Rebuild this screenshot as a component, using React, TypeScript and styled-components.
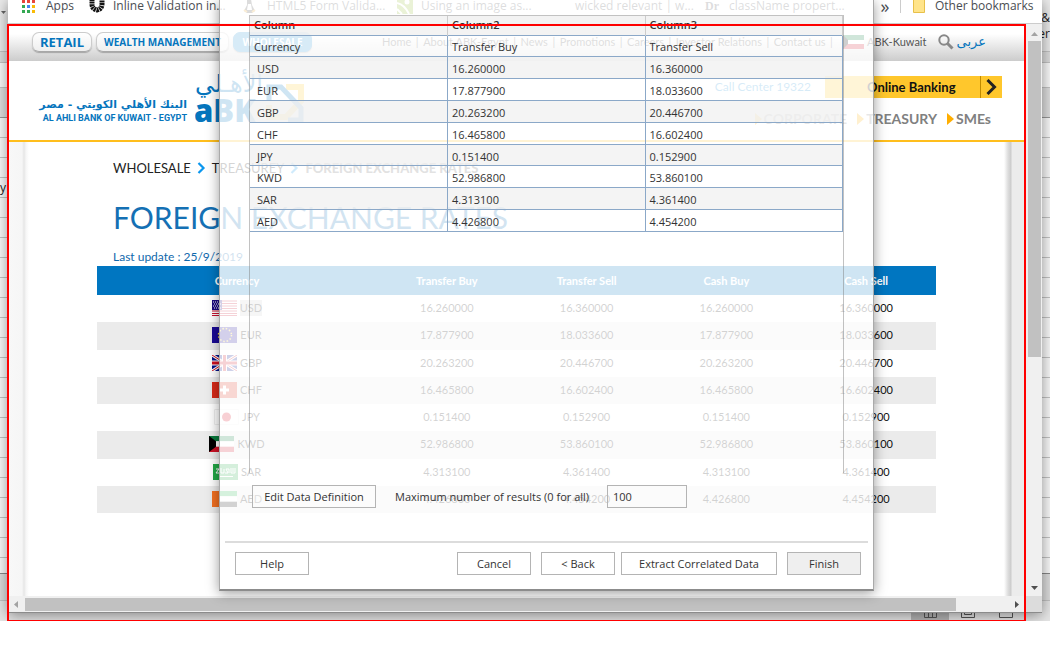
import React from 'react';
import styled, { createGlobalStyle } from 'styled-components';

const site = "Lato, 'Open Sans', sans-serif";
const system = "'Open Sans', 'Noto Sans', sans-serif";
const arabic = "'DejaVu Sans', sans-serif";

const Global = createGlobalStyle`
  * { box-sizing: border-box; }
  body { margin: 0; background: #fff; font-family: ${site}; }
  a { text-decoration: none; color: inherit; white-space: nowrap; }
  button, input { font: inherit; color: inherit; margin: 0; }
  h1 { margin: 0; font-weight: 400; }
  svg { display: block; flex: none; }
`;

const Desktop = styled.main`
  position: relative;
  overflow: hidden;
`;

const Sheet = styled.div`
  display: flex;
  flex-direction: column;
`;

const SheetRow = styled.div<{ $h: number; $bg?: string; $line?: string }>`
  height: ${p => p.$h}px;
  background: ${p => p.$bg || '#fbfbfb'};
  border-bottom: 1px solid ${p => p.$line || '#c4c4c4'};
  display: flex;
  justify-content: space-between;
  align-items: center;
  overflow: hidden;
  font: 12px/16px ${system};
  color: #222;
`;

const RibbonCaret = styled.div`
  padding: 0 0 26px 1px;
`;

const RibbonText = styled.div`
  margin-left: auto;
  width: 8px;
  display: flex;
  flex-direction: column;
  align-items: flex-end;
`;

const StatusBar = styled.div`
  height: 20px;
  background: #e6e6e6;
  display: flex;
  justify-content: flex-end;
  align-items: center;
  padding-right: 25px;
`;

const ViewIcon = styled.div<{ $on?: boolean }>`
  width: 38px;
  height: 20px;
  display: flex;
  align-items: center;
  justify-content: center;
  padding-top: 2px;
  background: ${p => (p.$on ? '#b4b4b4' : 'transparent')};
`;

const BrowserWindow = styled.section`
  position: absolute;
  top: 0;
  left: 8px;
  right: 8px;
  height: 613px;
  background: #fff;
  display: flex;
  flex-direction: column;
  border-bottom: 1px solid #8b8b8b;
  box-shadow: 0 2px 14px rgba(0, 0, 0, 0.45);
`;

const Bookmarks = styled.nav`
  height: 24px;
  padding: 0 11px 11px 14px;
  display: flex;
  align-items: center;
  font: 12px/12px ${system};
  color: #4a4d52;
  border-bottom: 1px solid #ccc;
`;

const Bookmark = styled.a<{ $w: number; $gap?: number }>`
  width: ${p => p.$w}px;
  display: flex;
  align-items: center;
  gap: ${p => p.$gap || 8}px;
  flex: none;
`;

const SerifMark = styled.strong`
  font: 700 12px/12px 'Liberation Serif', serif;
`;

const More = styled.button`
  border: 0;
  border-right: 1px solid #ccc;
  background: none;
  padding: 0 10px 0 0;
  width: 21px;
  height: 14px;
  line-height: 12px;
  margin-left: auto;
  margin-right: 12px;
  font-size: 18px;
`;

const Viewport = styled.div`
  flex: 1;
  display: grid;
  grid-template-columns: 1fr 17px;
  grid-template-rows: 1fr 16px;
  min-height: 0;
`;

const Site = styled.div`
  min-width: 0;
  display: flex;
  flex-direction: column;
  padding: 1px 1px 0 1px;
`;

const VScroll = styled.div`
  background: #f0f0f0;
  display: flex;
  flex-direction: column;
  align-items: center;
  justify-content: space-between;
  padding: 8px 1px 6px 2px;
`;

const VThumb = styled.div`
  width: 13px;
  height: 316px;
  margin: 5px 0 auto;
  background: #c1c1c1;
`;

const HScroll = styled.div`
  background: #f0f0f0;
  display: flex;
  align-items: center;
  padding: 0 6px;
`;

const HThumb = styled.div`
  width: 931px;
  height: 13px;
  margin: 0 auto 0 7px;
  background: #c1c1c1;
`;

const Corner = styled.div`
  background: #dcdcdc;
`;

const TopBar = styled.div`
  height: 36px;
  padding: 0 38px 2px 23px;
  display: flex;
  align-items: center;
  background: linear-gradient(#fff 25%, #cccccc);
  font-size: 11px;
  line-height: 16px;
  color: #555;
`;

const Pill = styled.button<{ $size: number; $w: number; $active?: boolean }>`
  width: ${p => p.$w}px;
  height: 20px;
  padding: 0;
  margin-right: 4px;
  border: 1px solid ${p => (p.$active ? '#2a94d6' : '#ccc')};
  border-bottom-color: ${p => (p.$active ? '#2a94d6' : '#a8a8a8')};
  border-radius: 7px;
  background: ${p => (p.$active ? '#2a94d6' : 'linear-gradient(#fff, #efefef)')};
  color: ${p => (p.$active ? '#fff' : '#0575bd')};
  font: 700 ${p => p.$size}px/16px 'Open Sans', sans-serif;
  white-space: nowrap;
  box-shadow: 0 1px 1px rgba(0, 0, 0, 0.25);
`;

const TopLinks = styled.div`
  width: 451px;
  margin-left: 66px;
  display: flex;
  justify-content: space-between;
`;

const TopRight = styled.div`
  flex: 1;
  display: flex;
  align-items: center;
  justify-content: space-between;
  margin-left: 10px;
`;

const KuwaitLink = styled.a`
  padding-right: 8px;
`;

const ArabicLink = styled.a`
  font: 13px/16px ${arabic};
  color: #0575bd;
`;

const Header = styled.header`
  height: 81px;
  border-bottom: 2px solid #ffbe1d;
  padding: 0 22px 0 31px;
  display: flex;
  justify-content: space-between;
`;

const Brand = styled.div`
  display: flex;
  align-items: flex-start;
  gap: 8px;
  padding-top: 8px;
`;

const BankName = styled.div`
  width: 147px;
  padding-top: 28px;
  color: #0575bd;
  text-align: right;
  white-space: nowrap;
`;

const BankArabic = styled.div`
  font: 700 11px/15px ${arabic};
`;

const BankEnglish = styled.div`
  font: 700 9px/12px Roboto, sans-serif;
`;

const HeaderRight = styled.div`
  display: flex;
  flex-direction: column;
  align-items: flex-end;
  gap: 13px;
  padding-top: 15px;
`;

const CallRow = styled.div`
  display: flex;
  align-items: center;
  gap: 14px;
  font-size: 12px;
  line-height: 16px;
  color: #2a94d6;
`;

const Banking = styled.a`
  width: 177px;
  height: 22px;
  display: flex;
  background: #ffc72c;
  color: #111;
  font-weight: 700;
  font-size: 13px;
  line-height: 22px;
`;

const BankingText = styled.span`
  flex: 1;
  padding-left: 42px;
  border-right: 1px solid #c08a00;
`;

const BankingArrow = styled.span`
  width: 21px;
  display: flex;
  align-items: center;
  justify-content: center;
`;

const Sections = styled.div`
  display: flex;
  gap: 10px;
  padding-right: 11px;
  font-size: 14px;
  line-height: 16px;
  font-weight: 700;
  color: #808080;
`;

const Section = styled.a`
  display: flex;
  align-items: center;
  gap: 2px;
`;

const Body = styled.div`
  flex: 1;
  display: grid;
  grid-template-columns: 20px 1fr 20px;
`;

const Shade = styled.div<{ $right?: boolean }>`
  background: ${p =>
    p.$right
      ? 'linear-gradient(90deg, #fff, #ddd 4px, #ccc 7px, #ececec 8px, #ececec)'
      : 'linear-gradient(90deg, #f8f8f8, #f6f6f6 13px, #e6e6e6 15px, #f6f6f6 17px, #fff)'};
`;

const Content = styled.div`
  padding: 0 68px;
`;

const Crumbs = styled.div`
  display: flex;
  align-items: center;
  gap: 6px;
  padding: 16px 0 0 16px;
  font-size: 13px;
  line-height: 20px;
  color: #222;
`;

const Here = styled.strong`
  font-weight: 900;
  color: #666;
  white-space: nowrap;
`;

const Title = styled.h1`
  padding: 19px 0 0 16px;
  font-size: 30px;
  line-height: 40px;
  color: #1470b4;
  white-space: nowrap;
`;

const Updated = styled.div`
  padding: 12px 0 0 16px;
  font-size: 12px;
  line-height: 16px;
  color: #0f68ac;
`;

const Rates = styled.table`
  width: 100%;
  height: 247px;
  table-layout: fixed;
  border-collapse: collapse;
  margin-top: 1px;
  font-size: 11px;
  line-height: 16px;
  text-align: center;
  color: #111;

  th { height: 29px; padding: 0; background: #0076c1; color: #fff; font-weight: 700; }
  th:first-child { width: 280px; }
  td { padding: 0 0 1px; }
  tbody tr:nth-child(even) { background: #ebebeb; }
`;

const Code = styled.span<{ $hi?: boolean }>`
  background: ${p => (p.$hi ? '#d0d0d0' : 'transparent')};
`;

const FlagCell = styled.div`
  display: flex;
  justify-content: center;
  align-items: center;
  gap: 3px;
`;

const Dialog = styled.section`
  position: absolute;
  top: 0;
  left: 219px;
  width: 655px;
  height: 591px;
  padding: 15px 5px 0;
  display: flex;
  flex-direction: column;
  background: rgba(255, 255, 255, 0.81);
  border: 1px solid #aaa;
  border-top: 0;
  border-bottom: 2px solid #8c8c8c;
  box-shadow: 0 2px 12px rgba(0, 0, 0, 0.4);
  font: 11px/16px ${system};
  color: #333;
`;

const GridBox = styled.div`
  height: 458px;
  margin: 0 24px;
  border: 1px solid rgba(120, 120, 120, 0.45);
  border-bottom: 0;
`;

const Grid = styled.table`
  width: 100%;
  height: 216px;
  table-layout: fixed;
  border-collapse: collapse;

  th { height: 19px; padding: 0 4px; text-align: left; font-weight: 600; background: rgba(240, 240, 240, 0.8); border-right: 1px solid #ccc; }
  td { padding: 3px 4px 0; border: 1px solid #8ba8c8; }
  td:first-child { border-left: 0; }
  tr + tr td:first-child { padding-left: 7px; }
  tbody tr:nth-child(even) { background: rgba(240, 240, 240, 0.7); }
`;

const Options = styled.div`
  display: flex;
  align-items: center;
  padding: 12px 0 0 27px;
`;

const Btn = styled.button<{ $w: number; $shade?: boolean }>`
  width: ${p => p.$w}px;
  height: 23px;
  padding: 0;
  border: 1px solid #b4b4b4;
  background: ${p => (p.$shade ? '#efefef' : 'rgba(255, 255, 255, 0.3)')};
  white-space: nowrap;
`;

const MaxLabel = styled.label`
  width: 212px;
  margin-left: 19px;
  white-space: nowrap;
`;

const MaxInput = styled.input`
  width: 80px;
  height: 23px;
  padding: 0 5px;
  border: 1px solid #b4b4b4;
  background: transparent;
`;

const Footer = styled.footer`
  display: flex;
  gap: 6px;
  margin-top: 33px;
  padding: 9px 7px 0 10px;
  border-top: 2px solid #dcdcdc;
`;

const ButtonPair = styled.div`
  display: flex;
  gap: 10px;
`;

const Spacer = styled.div`
  flex: 1;
`;

const RedFrame = styled.div`
  position: absolute;
  top: 24px;
  left: 7px;
  right: 24px;
  bottom: 0;
  border: 2px solid #f00;
  border-bottom-width: 1px;
  pointer-events: none;
`;

const rates = [
  ['USD', '16.260000', '16.360000'],
  ['EUR', '17.877900', '18.033600'],
  ['GBP', '20.263200', '20.446700'],
  ['CHF', '16.465800', '16.602400'],
  ['JPY', '0.151400', '0.152900'],
  ['KWD', '52.986800', '53.860100'],
  ['SAR', '4.313100', '4.361400'],
  ['AED', '4.426800', '4.454200'],
];

function Flag({ code }: { code: string }) {
  const art: Record<string, React.ReactNode> = {
    USD: (
      <>
        <path d="M0 0h25v16H0z" fill="#fff" />
        <path d="M0 1h25M0 3.500h25M0 6h25M0 8.500h25M0 11h25M0 13.500h25M0 15.500h25" stroke="#c8102e" />
        <path d="M0 0h10v10H0z" fill="#1a0a80" />
        <path d="M1 2h8M2 4h8M1 6h8M2 8h8" stroke="#fff" strokeDasharray="1 1" />
      </>
    ),
    EUR: (
      <>
        <path d="M0 0h25v16H0z" fill="#1a0a96" />
        <circle cx="13" cy="8" r="6.500" fill="none" stroke="#fd3" strokeWidth="1.500" strokeDasharray="1.500 1.900" />
      </>
    ),
    GBP: (
      <>
        <path d="M0 0h25v16H0z" fill="#00108a" />
        <path d="M0 0l25 16M25 0L0 16" stroke="#fff" strokeWidth="3" />
        <path d="M0 0l25 16M25 0L0 16" stroke="#d01020" />
        <path d="M12.500 0v16M0 8h25" stroke="#fff" strokeWidth="5" />
        <path d="M12.500 0v16M0 8h25" stroke="#d01020" strokeWidth="3" />
      </>
    ),
    CHF: (
      <>
        <path d="M0 0h25v16H0z" fill="#d82a18" />
        <path d="M12.500 3.500v9M8 8h9" stroke="#fff" strokeWidth="3" />
      </>
    ),
    JPY: (
      <>
        <path d="M.5.5h24v15H.5z" fill="#fff" stroke="#eee" />
        <circle cx="12.500" cy="8" r="4.500" fill="#d80a1e" />
      </>
    ),
    KWD: (
      <>
        <path d="M0 0h25v5.300H0z" fill="#087a3c" />
        <path d="M0 5.300h25v5.400H0z" fill="#fff" />
        <path d="M0 10.700h25V16H0z" fill="#ce1126" />
        <path d="M0 0l7 5.300v5.400L0 16z" fill="#000" />
      </>
    ),
    SAR: (
      <>
        <path d="M0 0h25v16H0z" fill="#22a846" />
        <path d="M3 5h3L3 9h4M8 4v5h3V5M12 9h3l-2-4h3v4M18 4v5h4V4M20 4v4" fill="none" stroke="#fff" />
        <path d="M6 12.500h14" stroke="#fff" />
      </>
    ),
    AED: (
      <>
        <path d="M0 0h25v5.300H0z" fill="#22b24c" />
        <path d="M0 5.300h25v5.400H0z" fill="#fff" />
        <path d="M0 10.700h25V16H0z" fill="#111" />
        <path d="M0 0h7v16H0z" fill="#f37021" />
      </>
    ),
  };
  return (
    <svg width="25" height="16" viewBox="0 0 25 16">
      {art[code]}
    </svg>
  );
}

const Chevron = () => (
  <svg width="9" height="14" viewBox="0 0 9 14">
    <path d="M1.500 2l5 5-5 5" fill="none" stroke="#0a96ee" strokeWidth="2.200" />
  </svg>
);

const Triangle = () => (
  <svg width="7" height="12" viewBox="0 0 7 12">
    <path d="M0 0l7 6-7 6z" fill="#ffae00" />
  </svg>
);

function Logo() {
  return (
    <svg width="112" height="58" viewBox="0 0 112 58">
      <text x="0" y="23" fontFamily="DejaVu Sans" fontSize="24" fill="#0575bd">الأهـلي</text>
      <text x="-1" y="53" fontFamily="Open Sans" fontWeight="800" fontSize="31" fill="#0575bd">aBK</text>
      <path d="M91 18h15v14L91 48H74V36" fill="none" stroke="#ffc72c" strokeWidth="6" />
      <path d="M74 32V18h12l20 21v12H93" fill="none" stroke="#0575bd" strokeWidth="5" />
    </svg>
  );
}

const gridRows = [['Currency', 'Transfer Buy', 'Transfer Sell'], ...rates];
const topLinks = ['Home', 'About ABK-Egypt', 'News', 'Promotions', 'Careers', 'Investor Relations', 'Contact us'];

export default function App() {
  return (
    <>
      <Global />
      <Desktop>
        <Sheet>
          <SheetRow $h={52} $bg="#ececec">
            <RibbonCaret>
              <svg width="5" height="3" viewBox="0 0 5 3"><path d="M0 0h5L2.500 3z" fill="#666" /></svg>
            </RibbonCaret>
            <RibbonText><span>&amp;</span><span>er</span></RibbonText>
          </SheetRow>
          <SheetRow $h={11} $bg="#dedede" />
          <SheetRow $h={25} />
          <SheetRow $h={30} $bg="#e0e0e0" $line="#999" />
          <SheetRow $h={20} />
          <SheetRow $h={20} />
          <SheetRow $h={20} />
          <SheetRow $h={20}>y</SheetRow>
          {Array.from({ length: 18 }, (_, i) => <SheetRow key={i} $h={20} />)}
          <SheetRow $h={16} $line="#888" />
          <SheetRow $h={27} $bg="#dedede" />
          <StatusBar>
            <ViewIcon $on>
              <svg width="13" height="11" viewBox="0 0 13 11"><path d="M.5.5h12v10H.5zM.5 5.500h12M4.500.5v10M8.500.5v10" fill="none" stroke="#555" /></svg>
            </ViewIcon>
            <ViewIcon>
              <svg width="14" height="11" viewBox="0 0 14 11"><path d="M.5.5h13v10H.5zM3.500.5v7h7v-7M5 4.500h4" fill="none" stroke="#555" /></svg>
            </ViewIcon>
            <ViewIcon>
              <svg width="14" height="11" viewBox="0 0 14 11"><path d="M.5.5h13v10H.5z" fill="none" stroke="#555" /></svg>
            </ViewIcon>
          </StatusBar>
        </Sheet>

        <BrowserWindow>
          <Bookmarks>
            <Bookmark href="#" $w={67} $gap={11}>
              <svg width="13" height="13" viewBox="0 0 13 13">
                <path d="M0 0h3v3H0zM5 0h3v3H5zM10 0h3v3h-3z" fill="#e8453c" />
                <path d="M0 5h3v3H0zM0 10h3v3H0zM5 10h3v3H5z" fill="#34a853" />
                <path d="M5 5h3v3H5z" fill="#4285f4" />
                <path d="M10 5h3v3h-3zM10 10h3v3h-3z" fill="#f9bb06" />
              </svg>
              Apps
            </Bookmark>
            <Bookmark href="#" $w={154}>
              <svg width="16" height="14" viewBox="0 0 16 14">
                <path d="M3 0v5q0 5 5 6 5-1 5-6V0" fill="none" stroke="#111" strokeWidth="5" strokeDasharray="2 .6" />
              </svg>
              Inline Validation in...
            </Bookmark>
            <Bookmark href="#" $w={154} $gap={11}>
              <svg width="13" height="14" viewBox="0 0 13 14">
                <path d="M4 0h4l1 6 3 6-3 2H4l-3-2 3-6z" fill="#444" /><path d="M5 5h3l1 6H4z" fill="#fff" /><path d="M1 11l3 2M12 11l-3 2" stroke="#e8a020" strokeWidth="2" />
              </svg>
              HTML5 Form Valida...
            </Bookmark>
            <Bookmark href="#" $w={178}>
              <svg width="16" height="16" viewBox="0 0 16 16">
                <path d="M0 0h16v16H0z" fill="#8fb82a" /><circle cx="10" cy="4" r="2.500" fill="#fff" /><path d="M0 5q8 2 12 11M0 11l5 5" fill="none" stroke="#fff" strokeWidth="2" />
              </svg>
              Using an image as...
            </Bookmark>
            <Bookmark href="#" $w={130}>wicked relevant | w...</Bookmark>
            <Bookmark href="#" $w={150} $gap={10}>
              <SerifMark>Dr</SerifMark>
              className propert...
            </Bookmark>
            <More aria-label="More bookmarks">»</More>
            <Bookmark href="#" $w={118} $gap={10}>
              <svg width="12" height="16" viewBox="0 0 12 16"><path d="M.5 0h11v14.500H.5z" fill="#ffe48a" stroke="#e8c04a" /></svg>
              Other bookmarks
            </Bookmark>
          </Bookmarks>

          <Viewport>
            <Site>
              <TopBar>
                <Pill $size={13} $w={60}>RETAIL</Pill>
                <Pill $size={10} $w={133}>WEALTH MANAGEMENT</Pill>
                <Pill $size={10} $w={79} $active>WHOLESALE</Pill>
                <TopLinks>
                  {topLinks.map(t => (
                    <React.Fragment key={t}><a href="#">{t}</a><span>|</span></React.Fragment>
                  ))}
                </TopLinks>
                <TopRight>
                  <svg width="21" height="14" viewBox="0 0 21 14">
                    <path d="M0 0h21v5H0z" fill="#087a3c" /><path d="M0 5h21v4H0z" fill="#fff" /><path d="M0 9h21v5H0z" fill="#ce1126" /><path d="M0 0l5 5v4l-5 5z" fill="#000" />
                  </svg>
                  <KuwaitLink href="#">ABK-Kuwait</KuwaitLink>
                  <svg width="16" height="16" viewBox="0 0 16 16"><circle cx="6" cy="6" r="4.700" fill="none" stroke="#888" strokeWidth="2" /><path d="M9.500 9.500l5 5" stroke="#888" strokeWidth="3" /></svg>
                  <ArabicLink href="#" lang="ar">عربى</ArabicLink>
                </TopRight>
              </TopBar>
              <Header>
                <Brand>
                  <BankName>
                    <BankArabic lang="ar" dir="rtl">البنك الأهلي الكويتي - مصر</BankArabic>
                    <BankEnglish>AL AHLI BANK OF KUWAIT - EGYPT</BankEnglish>
                  </BankName>
                  <Logo />
                </Brand>
                <HeaderRight>
                  <CallRow>
                    Call Center 19322
                    <Banking href="#">
                      <BankingText>Online Banking</BankingText>
                      <BankingArrow>
                        <svg width="11" height="16" viewBox="0 0 11 16"><path d="M1.500 1l7 7-7 7" fill="none" stroke="#222" strokeWidth="3" /></svg>
                      </BankingArrow>
                    </Banking>
                  </CallRow>
                  <Sections>
                    <Section href="#"><Triangle />CORPORATE</Section>
                    <Section href="#"><Triangle />TREASURY</Section>
                    <Section href="#"><Triangle />SMEs</Section>
                  </Sections>
                </HeaderRight>
              </Header>
              <Body>
                <Shade />
                <Content>
                  <Crumbs>
                    <a href="#">WHOLESALE</a><Chevron /><a href="#">TREASUREY</a><Chevron /><Here>FOREIGN EXCHANGE RATES</Here>
                  </Crumbs>
                  <Title>FOREIGN EXCHANGE RATES</Title>
                  <Updated>Last update : 25/9/2019</Updated>
                  <Rates>
                    <thead>
                      <tr><th>Currency</th><th>Transfer Buy</th><th>Transfer Sell</th><th>Cash Buy</th><th>Cash Sell</th></tr>
                    </thead>
                    <tbody>
                      {rates.map(([code, buy, sell]) => (
                        <tr key={code}>
                          <td><FlagCell><Flag code={code} /><Code $hi={code === 'USD'}>{code}</Code></FlagCell></td>
                          <td>{buy}</td><td>{sell}</td><td>{buy}</td><td>{sell}</td>
                        </tr>
                      ))}
                    </tbody>
                  </Rates>
                </Content>
                <Shade $right />
              </Body>
            </Site>
            <VScroll>
              <svg width="7" height="4" viewBox="0 0 7 4"><path d="M0 4l3.500-4L7 4z" fill="#a3a3a3" /></svg>
              <VThumb />
              <svg width="7" height="4" viewBox="0 0 7 4"><path d="M0 0l3.500 4L7 0z" fill="#505050" /></svg>
            </VScroll>
            <HScroll>
              <svg width="4" height="7" viewBox="0 0 4 7"><path d="M4 0L0 3.500 4 7z" fill="#a3a3a3" /></svg>
              <HThumb />
              <svg width="4" height="7" viewBox="0 0 4 7"><path d="M0 0l4 3.500L0 7z" fill="#505050" /></svg>
            </HScroll>
            <Corner />
          </Viewport>
        </BrowserWindow>

        <Dialog>
          <GridBox>
            <Grid>
              <thead><tr><th>Column</th><th>Column2</th><th>Column3</th></tr></thead>
              <tbody>
                {gridRows.map(r => <tr key={r[0]}>{r.map(c => <td key={c}>{c}</td>)}</tr>)}
              </tbody>
            </Grid>
          </GridBox>
          <Options>
            <Btn $w={124}>Edit Data Definition</Btn>
            <MaxLabel htmlFor="max-results">Maximum number of results (0 for all)</MaxLabel>
            <MaxInput id="max-results" type="text" defaultValue="100" />
          </Options>
          <Footer>
            <Btn $w={74}>Help</Btn>
            <Spacer />
            <ButtonPair>
              <Btn $w={74}>Cancel</Btn>
              <Btn $w={74}>&lt; Back</Btn>
            </ButtonPair>
            <ButtonPair>
              <Btn $w={156}>Extract Correlated Data</Btn>
              <Btn $w={74} $shade>Finish</Btn>
            </ButtonPair>
          </Footer>
        </Dialog>
        <RedFrame />
      </Desktop>
    </>
  );
}
